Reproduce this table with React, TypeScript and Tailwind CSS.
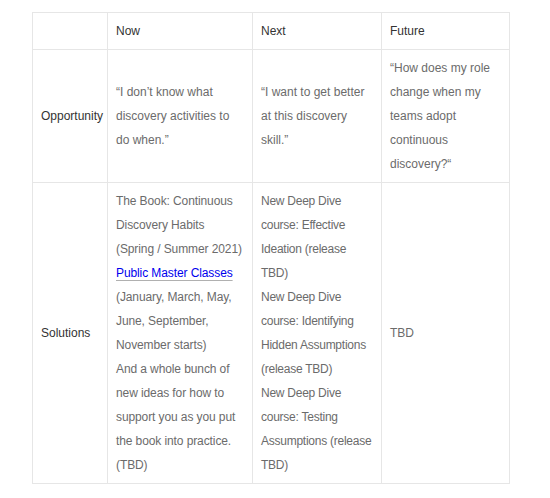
const cell = "border border-[#e6e6e6] px-2 py-[6px] align-middle"

export default function App() {
  return (
    <div className="min-h-[498px] w-[550px] bg-white pt-3 pl-8 font-['Liberation_Sans',Arial,sans-serif] text-[12px] leading-6">
      <table className="w-[477px] table-fixed border-collapse">
        <colgroup>
          <col className="w-[75px]" />
          <col className="w-[145px]" />
          <col className="w-[129px]" />
          <col className="w-[128px]" />
        </colgroup>
        <thead>
          <tr className="text-left text-[#333]">
            <th className={`${cell} font-normal`}></th>
            <th className={`${cell} font-normal`}>Now</th>
            <th className={`${cell} font-normal`}>Next</th>
            <th className={`${cell} font-normal`}>Future</th>
          </tr>
        </thead>
        <tbody className="text-[#6b6b6b]">
          <tr>
            <td className={`${cell} text-[#333]`}>Opportunity</td>
            <td className={cell}>“I don’t know what discovery activities to do when.”</td>
            <td className={cell}>“I want to get better at this discovery skill.”</td>
            <td className={cell}>“How does my role change when my teams adopt continuous discovery?“</td>
          </tr>
          <tr>
            <td className={`${cell} text-[#333]`}>Solutions</td>
            <td className={`${cell} tracking-[-0.1px]`}>
              The Book: Continuous Discovery Habits (Spring / Summer 2021)
              <br />
              <a href="#" className="text-[#0000ee] underline decoration-[#b0b0b0] underline-offset-[3px]">
                Public Master Classes
              </a>
              <br />
              (January, March, May, June, September, November starts)
              <br />
              And a whole bunch of new ideas for how to support you as you put the book into practice. (TBD)
            </td>
            <td className={`${cell} tracking-[-0.25px]`}>
              New Deep Dive course: Effective Ideation (release TBD)
              <br />
              New Deep Dive course: Identifying Hidden Assumptions (release TBD)
              <br />
              New Deep Dive course: Testing Assumptions (release TBD)
            </td>
            <td className={cell}>TBD</td>
          </tr>
        </tbody>
      </table>
    </div>
  )
}
